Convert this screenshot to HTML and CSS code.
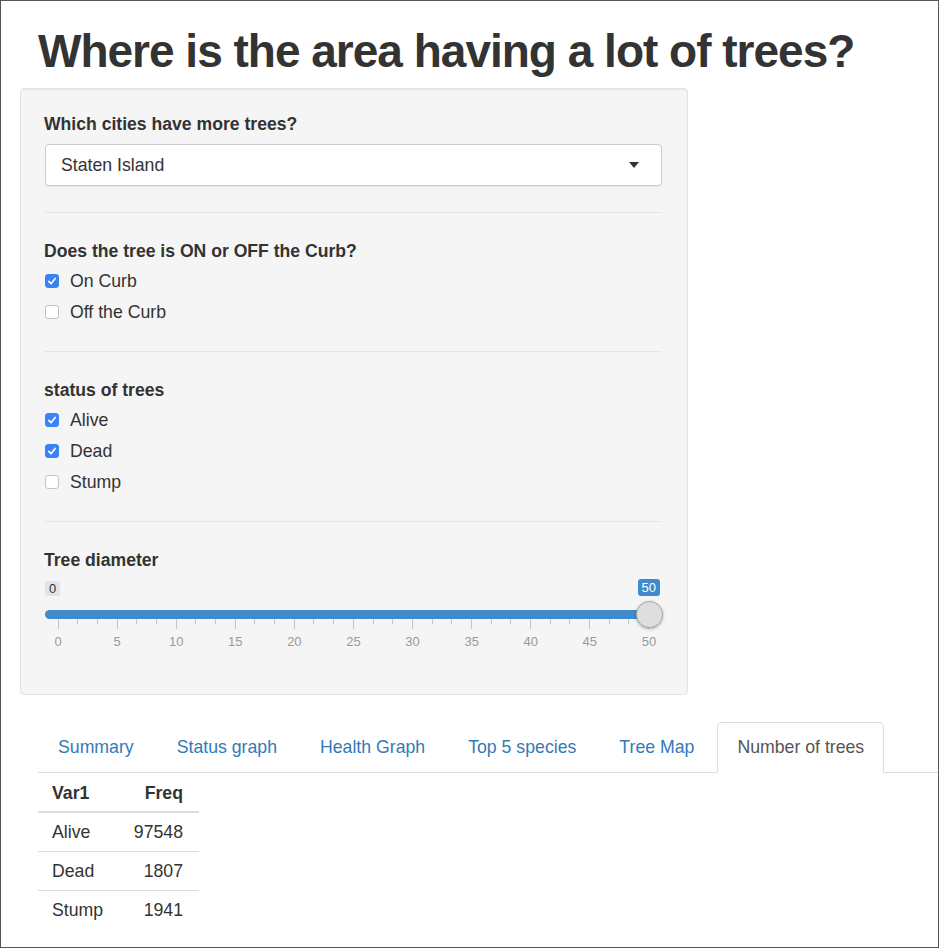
FILE: index.html
```html
<!DOCTYPE html>
<html>
<head>
<meta charset="utf-8">
<link rel="stylesheet" href="styles.css">
</head>
<body>
<div class="frame">
  <h1 class="title">Where is the area having a lot of trees?</h1>
  <div class="well">
    <div class="group group-select">
      <div class="label">Which cities have more trees?</div>
      <div class="select"><span>Staten Island</span><span class="caret"></span></div>
    </div>
    <hr class="sep sep-first">
    <div class="group">
      <div class="label">Does the tree is ON or OFF the Curb?</div>
      <div class="checks">
        <div class="check"><span class="box on"><svg viewBox="0 0 14 14" width="14" height="14"><polyline points="3.8,7.4 6,9.8 10.2,4.4" fill="none" stroke="#fff" stroke-width="1.6" stroke-linecap="round" stroke-linejoin="round"/></svg></span><span>On Curb</span></div>
        <div class="check"><span class="box"></span><span>Off the Curb</span></div>
      </div>
    </div>
    <hr class="sep">
    <div class="group">
      <div class="label">status of trees</div>
      <div class="checks">
        <div class="check"><span class="box on"><svg viewBox="0 0 14 14" width="14" height="14"><polyline points="3.8,7.4 6,9.8 10.2,4.4" fill="none" stroke="#fff" stroke-width="1.6" stroke-linecap="round" stroke-linejoin="round"/></svg></span><span>Alive</span></div>
        <div class="check"><span class="box on"><svg viewBox="0 0 14 14" width="14" height="14"><polyline points="3.8,7.4 6,9.8 10.2,4.4" fill="none" stroke="#fff" stroke-width="1.6" stroke-linecap="round" stroke-linejoin="round"/></svg></span><span>Dead</span></div>
        <div class="check"><span class="box"></span><span>Stump</span></div>
      </div>
    </div>
    <hr class="sep">
    <div class="group">
      <div class="label">Tree diameter</div>
      <div class="slider">
        <div class="badges"><span class="badge min">0</span><span class="badge max">50</span></div>
        <div class="track"><span class="handle"></span></div>
        <div class="ticks">
          <i class="major"></i><i></i><i></i><i class="major"></i><i></i><i></i><i class="major"></i><i></i><i></i><i class="major"></i><i></i><i></i><i class="major"></i><i></i><i></i><i class="major"></i><i></i><i></i><i class="major"></i><i></i><i></i><i class="major"></i><i></i><i></i><i class="major"></i><i></i><i></i><i class="major"></i><i></i><i></i><i class="major"></i>
        </div>
        <div class="tick-labels">
          <span>0</span><span>5</span><span>10</span><span>15</span><span>20</span><span>25</span><span>30</span><span>35</span><span>40</span><span>45</span><span>50</span>
        </div>
      </div>
    </div>
  </div>
  <div class="tabs">
    <a class="tab">Summary</a>
    <a class="tab">Status graph</a>
    <a class="tab">Health Graph</a>
    <a class="tab">Top 5 species</a>
    <a class="tab">Tree Map</a>
    <a class="tab active">Number of trees</a>
  </div>
  <table class="data">
    <thead><tr><th class="c1">Var1</th><th class="c2">Freq</th></tr></thead>
    <tbody>
      <tr><td class="c1">Alive</td><td class="c2">97548</td></tr>
      <tr><td class="c1">Dead</td><td class="c2">1807</td></tr>
      <tr><td class="c1">Stump</td><td class="c2">1941</td></tr>
    </tbody>
  </table>
</div>
</body>
</html>
```
FILE: styles.css
```css
html, body { margin: 0; padding: 0; background: #fff; }
body { font-family: "Liberation Sans", Arial, Helvetica, sans-serif; color: #333; font-size: 17.7px; }
.frame { width: 939px; height: 948px; border: 1px solid #555; box-sizing: border-box; overflow: hidden; }
.title { margin: 24px 0 0 37px; font-size: 46px; line-height: 53px; font-weight: bold; color: #333; letter-spacing: -1px; }
.well { margin: 10px 0 0 19px; width: 668px; height: 607px; box-sizing: border-box; padding: 23px 25px 23px 23px; background: #f5f5f5; border: 1px solid #e3e3e3; border-radius: 4px; box-shadow: inset 0 1px 1px rgba(0,0,0,0.05); }
.label { font-weight: bold; font-size: 17.6px; line-height: 24px; margin-bottom: 8px; }
.select { height: 42px; box-sizing: border-box; margin-left: 1px; border: 1px solid #ccc; border-radius: 4px; background: #fff; display: flex; align-items: center; justify-content: space-between; padding: 0 22px 0 15px; font-size: 17.7px; box-shadow: 0 1px 1px rgba(0,0,0,0.06); }
.caret { width: 0; height: 0; border-top: 6px solid #333; border-left: 5px solid transparent; border-right: 5px solid transparent; }
.sep { border: 0; border-top: 1px solid #e6e6e6; margin: 27px 0 26px 0; }
.sep-first { margin-top: 26px; }
.checks { display: flex; flex-direction: column; gap: 7px; margin-top: -2px; }
.check { display: flex; align-items: center; height: 24px; line-height: 24px; font-size: 17.7px; }
.box { width: 14px; height: 14px; box-sizing: border-box; margin: 0 11px 0 1px; border: 1px solid #c4c4c4; border-radius: 3px; background: #fff; display: flex; }
.box.on { background: #3a82f6; border-color: #3a82f6; }
.box.on svg { margin: -1px; }
.slider { position: relative; margin-top: -1px; }
.badges { display: flex; justify-content: space-between; margin-right: 2px; height: 17px; }
.badge { font-size: 13px; line-height: 17px; padding: 0 4px; border-radius: 3px; }
.badge.min { background: #e1e4e9; color: #333; margin-left: 1px; margin-top: 2px; height: 15px; line-height: 15px; }
.badge.max { background: #428bca; color: #fff; }
.track { position: relative; margin: 14px 0 0 1px; height: 9px; background: #428bca; border-radius: 5px; }
.handle { position: absolute; right: -0.5px; top: -9px; width: 27px; height: 27px; box-sizing: border-box; border-radius: 50%; background: #dedede; border: 1px solid #aaa; box-shadow: 0 1px 3px rgba(0,0,0,0.3); }
.ticks { display: flex; justify-content: space-between; align-items: flex-start; margin: 0 12.5px 0 13.5px; height: 10px; }
.ticks i { display: block; width: 1px; height: 5px; background: #b8c8d8; }
.ticks i.major { height: 10px; }
.tick-labels { display: flex; justify-content: space-between; margin: 5px 12.5px 0 13.5px; }
.tick-labels span { width: 1px; display: flex; justify-content: center; font-size: 13px; line-height: 16px; color: #999; white-space: nowrap; }
.tabs { display: flex; margin: 27px 0 0 37px; border-bottom: 1px solid #ddd; }
.tab { display: block; padding: 12px 19px; line-height: 25px; font-size: 17.7px; color: #337ab7; margin-right: 3px; border: 1px solid transparent; border-radius: 5px 5px 0 0; margin-bottom: -1px; }
.tab.active { color: #555; background: #fff; border-color: #ddd; border-bottom-color: transparent; }
.data { margin-left: 37px; border-collapse: collapse; width: 161px; font-size: 17.7px; }
.data th, .data td { padding: 7px 16px 7px 14px; line-height: 24px; }
.data th { font-weight: bold; border-bottom: 2px solid #ddd; padding-top: 8px; padding-bottom: 6px; }
.data td { border-top: 1px solid #ddd; }
.data tbody tr:first-child td { border-top: 0; }
.c1 { text-align: left; }
.c2 { text-align: right; }
```
